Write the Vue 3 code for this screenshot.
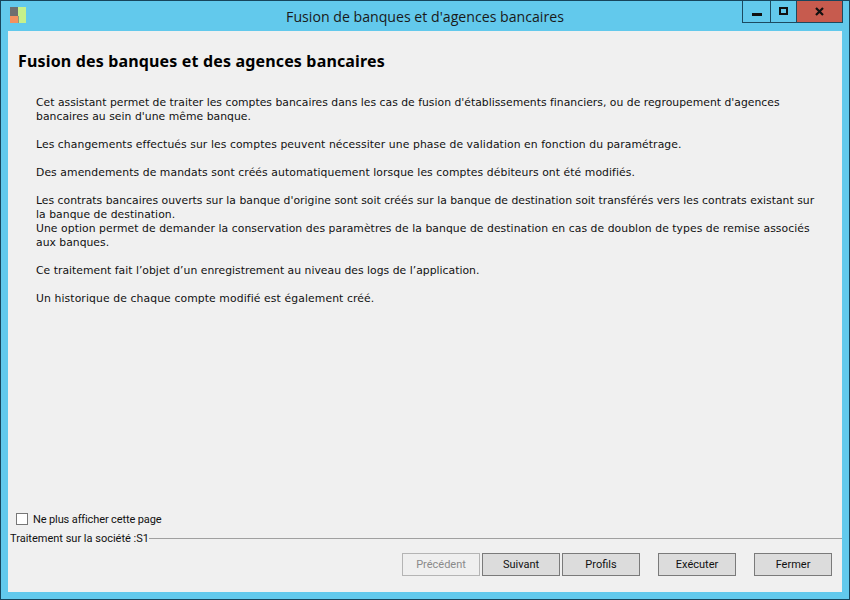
<script setup>
const paragraphs = [
  [
    { t: "Cet assistant permet de traiter les comptes bancaires dans les cas de fusion d'établissements financiers, ou de regroupement d'agences", ls: 0.007 },
    { t: "bancaires au sein d'une même banque.", ls: 0.03 },
  ],
  [{ t: "Les changements effectués sur les comptes peuvent nécessiter une phase de validation en fonction du paramétrage.", ls: 0.072 }],
  [{ t: "Des amendements de mandats sont créés automatiquement lorsque les comptes débiteurs ont été modifiés.", ls: 0.07 }],
  [
    { t: "Les contrats bancaires ouverts sur la banque d'origine sont soit créés sur la banque de destination soit transférés vers les contrats existant sur", ls: 0.007 },
    { t: "la banque de destination.", ls: 0.04 },
    { t: "Une option permet de demander la conservation des paramètres de la banque de destination en cas de doublon de types de remise associés", ls: 0.052 },
    { t: "aux banques.", ls: 0 },
  ],
  [{ t: "Ce traitement fait l’objet d’un enregistrement au niveau des logs de l’application.", ls: 0.012 }],
  [{ t: "Un historique de chaque compte modifié est également créé.", ls: 0.1 }],
]
</script>

<template>
  <div class="window">
    <header class="titlebar">
      <svg class="logo" width="17" height="17" viewBox="0 0 17 17">
        <rect x="0" y="0" width="9" height="9" fill="#6f6f6f" />
        <rect x="0" y="9" width="8" height="7" fill="#f4915f" />
        <rect x="8" y="0" width="8" height="16" fill="#c6f08a" />
        <rect x="8" y="9" width="1" height="7" fill="#8f9a7c" />
      </svg>
      <div class="title">Fusion de banques et d'agences bancaires</div>
      <div class="controls">
        <div class="ctl min"><span class="min-glyph"></span></div>
        <div class="ctl max"><span class="max-glyph"></span></div>
        <div class="ctl close">
          <svg width="9" height="9" viewBox="0 0 9 9"><path d="M1 1L8 8M8 1L1 8" stroke="#111" stroke-width="2.2" fill="none" /></svg>
        </div>
      </div>
    </header>
    <main class="client">
      <h1 class="heading">Fusion des banques et des agences bancaires</h1>
      <div class="body">
        <p v-for="(p, i) in paragraphs" :key="i" class="para">
          <span v-for="(l, j) in p" :key="j" class="line" :style="{ letterSpacing: l.ls + 'px' }">{{ l.t }}</span>
        </p>
      </div>
      <label class="check"><span class="box"></span><span>Ne plus afficher cette page</span></label>
      <div class="company">
        <span>Traitement sur la société :S1</span>
        <span class="rule"></span>
      </div>
      <footer class="buttons">
        <div class="group">
          <button class="btn disabled">Précédent</button>
          <button class="btn">Suivant</button>
          <button class="btn">Profils</button>
        </div>
        <button class="btn exec">Exécuter</button>
        <button class="btn close-btn">Fermer</button>
      </footer>
    </main>
  </div>
</template>

<style>
html, body { margin: 0; padding: 0; background: #62c9ec; }
</style>

<style scoped>
.window {
  width: 850px;
  height: 600px;
  box-sizing: border-box;
  background: #62c9ec;
  border: 1px solid #17455c;
  display: flex;
  flex-direction: column;
  overflow: hidden;
  font-family: "DejaVu Sans", sans-serif;
}
.titlebar {
  height: 29px;
  flex: none;
  display: flex;
  align-items: flex-start;
  position: relative;
}
.logo { margin: 6px 0 0 9px; }
.title {
  position: absolute;
  left: 0;
  right: 0;
  top: 6px;
  text-align: center;
  font: 14.15px/20px "Open Sans", sans-serif;
  color: #1a1a1a;
}
.controls {
  margin-left: auto;
  margin-right: 6px;
  display: flex;
  height: 21px;
  border: 1px solid #1c4a60;
  border-top: 0;
  position: relative;
}
.ctl {
  display: flex;
  align-items: center;
  justify-content: center;
  box-sizing: border-box;
}
.min { width: 28px; border-right: 1px solid #1c4a60; }
.max { width: 26px; border-right: 1px solid #1c4a60; }
.close { width: 45px; background: #c75b4e; }
.min-glyph { width: 10px; height: 3px; background: #111; margin-top: 5px; }
.max-glyph { border: 2px solid #111; margin-top: -1px; box-sizing: content-box; width: 5px; height: 4px; }
.client {
  flex: 1;
  margin: 1px 7px 7px;
  background: #f0f0f0;
  display: flex;
  flex-direction: column;
  min-height: 0;
}
.heading {
  margin: 19px 0 0 10px;
  font: bold 16px/22px "Noto Sans", sans-serif;
  letter-spacing: 0.16px;
  color: #000;
}
.body {
  flex: 1;
  margin: 24px 0 0 28px;
  font-size: 10.82px;
  line-height: 14px;
  color: #111;
}
.para { margin: 0 0 14px; }
.line { display: block; white-space: nowrap; }
.check {
  display: flex;
  align-items: center;
  gap: 5px;
  margin-left: 8px;
  font: 11px/14px Roboto, sans-serif;
  letter-spacing: -0.12px;
  color: #111;
}
.box {
  width: 10px;
  height: 10px;
  background: #fff;
  border: 1px solid #777;
  margin-top: -3px;
}
.company {
  display: flex;
  align-items: center;
  margin: 5px 0 0 2px;
  font: 11px/14px Roboto, sans-serif;
  color: #111;
}
.rule { flex: 1; height: 1px; background: #a0a0a0; margin-top: -2px; }
.buttons {
  display: flex;
  padding: 7px 10px 0 0;
  height: 46px;
  box-sizing: border-box;
  justify-content: flex-end;
}
.group { display: flex; gap: 2px; margin-right: 18px; }
.exec { margin-right: 18px; }
.btn {
  width: 78px;
  height: 23px;
  box-sizing: border-box;
  background: #dcdcdc;
  border: 1px solid #7a7a7a;
  font: 11px/14px Roboto, sans-serif;
  color: #111;
  padding: 0;
}
.disabled {
  background: #efefef;
  border-color: #b4b4b4;
  color: #8a8a8a;
}
</style>
